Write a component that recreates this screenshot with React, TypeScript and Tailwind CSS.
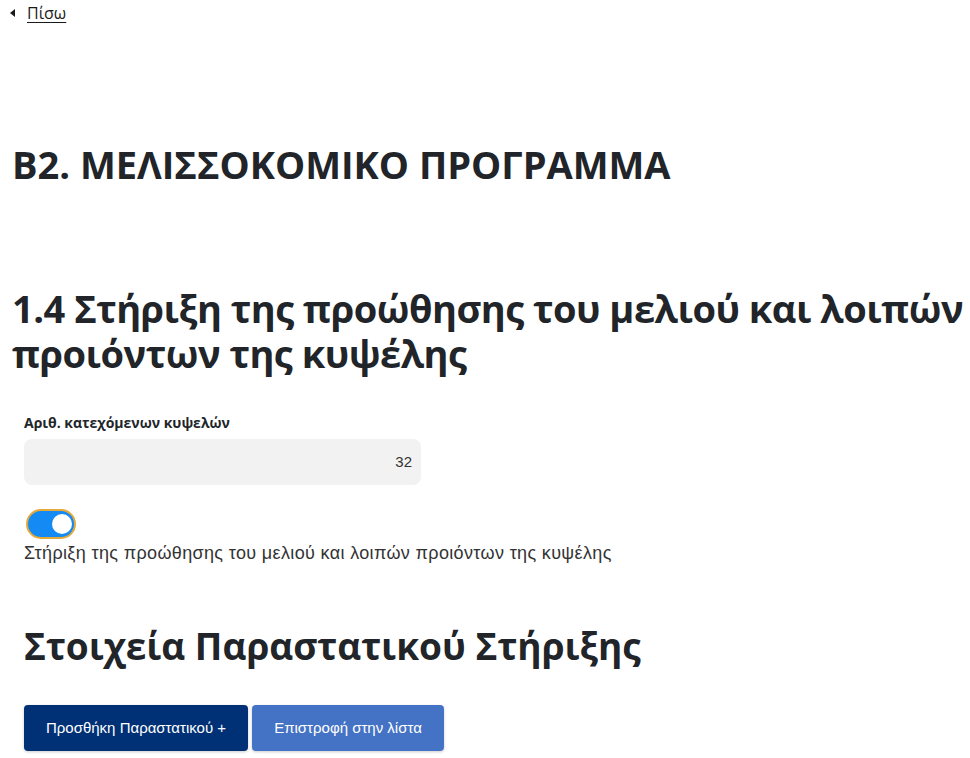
export default function App() {
  return (
    <div className="min-h-[758px] bg-white text-[#212529]" style={{ fontFamily: '"Liberation Sans", Arial, sans-serif' }}>
      <div className="pl-[10px]">
        <a href="#" className="inline-flex items-center gap-[12px] font-['Open_Sans',sans-serif] text-[16px] leading-[18px] text-[#1a1a1a] underline underline-offset-[3px]">
          <svg width="5" height="8" viewBox="0 0 5 8" className="mt-[1px]">
            <path d="M5 0 L0 4 L5 8 Z" fill="#1a1a1a" />
          </svg>
          <span>Πίσω</span>
        </a>
      </div>

      <h1 className="mt-[118px] pl-[12px] font-['Open_Sans',sans-serif] text-[38px] font-bold leading-[45.6px] text-[#212529]">
        B2. ΜΕΛΙΣΣΟΚΟΜΙΚΟ ΠΡΟΓΡΑΜΜΑ
      </h1>

      <h2 className="mt-[98px] pl-[12px] font-['Open_Sans',sans-serif] text-[38px] font-bold leading-[45.6px] tracking-[-0.5px] text-[#212529]">
        <span className="block whitespace-nowrap">1.4 Στήριξη της προώθησης του μελιού και λοιπών</span>
        <span className="block whitespace-nowrap">προιόντων της κυψέλης</span>
      </h2>

      <div className="mt-[36px] pl-[24px]">
        <label className="block font-['Open_Sans',sans-serif] text-[14px] font-bold leading-[20px] text-[#212529]">
          Αριθ. κατεχόμενων κυψελών
        </label>
        <div className="mt-[6px] flex h-[46px] w-[397px] items-center justify-end rounded-[8px] bg-[#f2f2f2] px-[9px] text-[15px] text-[#333]">
          32
        </div>

        <div className="mt-[24px] ml-[2px] flex h-[30px] w-[50px] items-center justify-end rounded-full border-2 border-[#e5a93a] bg-[#148bf4] pr-[2px]">
          <div className="h-[20px] w-[20px] rounded-full bg-white" />
        </div>
        <p className="mt-[1px] text-[18px] leading-[27px] tracking-[0.35px] text-[#333]">
          Στήριξη της προώθησης του μελιού και λοιπών προιόντων της κυψέλης
        </p>

        <h2 className="mt-[57px] font-['Open_Sans',sans-serif] text-[37px] font-bold leading-[44.4px] text-[#212529]">
          Στοιχεία Παραστατικού Στήριξης
        </h2>

        <div className="mt-[37px] flex gap-[4px]">
          <button className="h-[46px] w-[224px] rounded-[4px] bg-[#003176] text-[15px] text-white shadow-[0_1px_3px_rgba(0,0,0,0.2)]">
            Προσθήκη Παραστατικού +
          </button>
          <button className="h-[46px] w-[192px] rounded-[4px] bg-[#4472c4] text-[15px] text-white shadow-[0_1px_3px_rgba(0,0,0,0.2)]">
            Επιστροφή στην λίστα
          </button>
        </div>
      </div>
    </div>
  );
}
